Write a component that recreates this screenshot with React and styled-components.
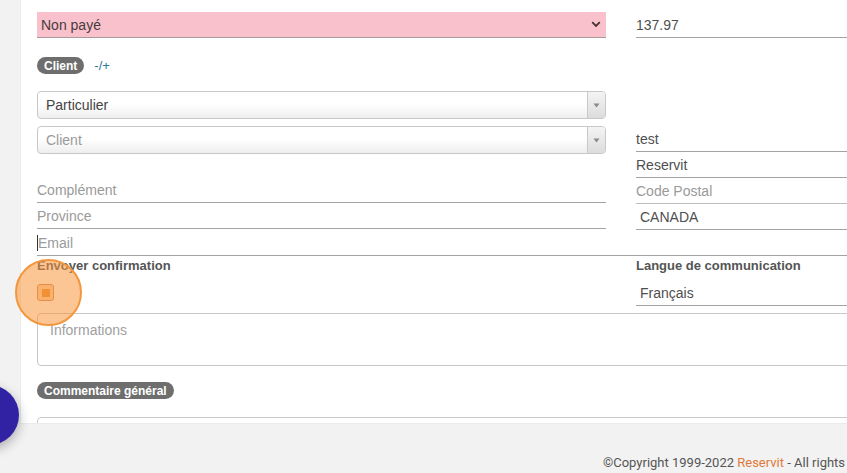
import React from "react";
import styled, { createGlobalStyle } from "styled-components";

const Global = createGlobalStyle`
  html, body { margin: 0; padding: 0; background: #f2f2f2; }
  body { width: 847px; height: 473px; overflow: hidden; font-family: "Liberation Sans", Arial, sans-serif; }
  * { box-sizing: border-box; }
`;

const Page = styled.div`
  position: relative;
  width: 847px;
  height: 473px;
  overflow: hidden;
  background: #f2f2f2;
`;

const Body = styled.div`
  display: flex;
  height: 423px;
  overflow: hidden;
`;

const SideStrip = styled.div`
  flex: 0 0 20px;
  background: #f2f2f2;
`;

const Card = styled.div`
  flex: 0 0 auto;
  width: 1240px;
  background: #fff;
  border-left: 1px solid #ececec;
  padding: 12px 0 0 16px;
`;

const Content = styled.div`
  width: 1168px;
  display: flex;
  flex-direction: column;
`;

const TwoCols = styled.div`
  display: grid;
  grid-template-columns: 569px 569px;
  column-gap: 30px;
  align-items: start;
  margin-top: ${(p) => p.$mt || 0}px;
`;

const Col = styled.div`
  display: flex;
  flex-direction: column;
`;

const PinkSelect = styled.div`
  height: 26px;
  background: #f8c1cb;
  border-bottom: 1px solid #a99a9c;
  display: flex;
  align-items: center;
  justify-content: space-between;
  padding: 0 5px 0 4px;
  font-size: 14px;
  color: #4a3b3e;
`;

const Line = styled.div`
  height: ${(p) => p.$h || 26}px;
  border-bottom: 1px solid ${(p) => (p.$light ? "#bdbdbd" : "#a3a3a3")};
  display: flex;
  align-items: center;
  padding-left: ${(p) => p.$pl || 0}px;
  font-size: 14px;
  color: ${(p) => (p.$ph ? "#9a9a9a" : "#4f4f4f")};
  margin-top: ${(p) => p.$mt || 0}px;
  position: relative;
`;

const Caret = styled.span`
  display: inline-block;
  width: 1px;
  height: 16px;
  background: #333;
`;

const BadgeRow = styled.div`
  display: flex;
  align-items: center;
  gap: 10px;
  margin-top: ${(p) => p.$mt || 0}px;
`;

const Badge = styled.span`
  display: inline-flex;
  align-items: center;
  height: 17px;
  padding: 0 7px;
  border-radius: 9px;
  background: #6e6e6e;
  color: #fff;
  font-weight: bold;
  font-size: 12px;
`;

const Toggle = styled.span`
  color: #2f7896;
  font-size: 13px;
`;

const Select2 = styled.div`
  height: 28px;
  border: 1px solid #c8c8c8;
  border-radius: 4px;
  background: linear-gradient(#ffffff 0%, #ffffff 45%, #eeeeee 100%);
  display: flex;
  align-items: stretch;
  font-size: 14px;
  color: ${(p) => (p.$ph ? "#9a9a9a" : "#444")};
  margin-top: ${(p) => p.$mt || 0}px;
  overflow: hidden;
`;

const Select2Text = styled.div`
  flex: 1;
  display: flex;
  align-items: center;
  padding-left: 8px;
`;

const Select2Arrow = styled.div`
  flex: 0 0 18px;
  border-left: 1px solid #c8c8c8;
  background: linear-gradient(#f4f4f4, #dcdcdc);
  display: flex;
  align-items: center;
  justify-content: center;
`;

const Label = styled.div`
  font-weight: bold;
  font-size: 13px;
  line-height: 16px;
  color: #555;
`;

const CheckWrap = styled.div`
  position: relative;
  width: 17px;
  height: 17px;
  margin-top: 10px;
`;

const CheckBox = styled.div`
  width: 17px;
  height: 17px;
  border: 1px solid #d08a55;
  border-radius: 3px;
  background: #fbd3b0;
  display: flex;
  align-items: center;
  justify-content: center;
  &::after {
    content: "";
    width: 8px;
    height: 8px;
    background: #ef8a2a;
  }
`;

const Highlight = styled.div`
  position: absolute;
  left: 50%;
  top: 50%;
  width: 67px;
  height: 67px;
  margin: -33.5px 0 0 -31px;
  border-radius: 50%;
  border: 2px solid #f2973e;
  background: rgba(247, 150, 60, 0.55);
  pointer-events: none;
`;

const TextArea = styled.div`
  height: ${(p) => p.$h || 53}px;
  border: 1px solid #c8c8c8;
  border-radius: 4px;
  margin-top: ${(p) => p.$mt || 0}px;
  padding: 8px 12px;
  font-size: 14px;
  color: #a0a0a0;
`;

const Footer = styled.div`
  height: 50px;
  background: #f2f2f2;
  border-top: 1px solid #ebebeb;
  padding: 31px 0 0 603px;
  font-family: Roboto, "Liberation Sans", sans-serif;
  font-size: 13px;
  line-height: 16px;
  color: #555;
  white-space: nowrap;
`;

const Brand = styled.span`
  color: #e07a3a;
`;

const Fab = styled.div`
  position: absolute;
  left: -41px;
  top: 385px;
  width: 60px;
  height: 60px;
  border-radius: 50%;
  background: #3022a2;
  box-shadow: 0 4px 12px rgba(0, 0, 0, 0.3);
`;

const Chevron = () => (
  <svg width="10" height="7" viewBox="0 0 10 7">
    <path d="M1.2 1.2 L5 5 L8.8 1.2" fill="none" stroke="#4a2f36" strokeWidth="1.8" />
  </svg>
);

const Tri = () => (
  <svg width="7" height="5" viewBox="0 0 7 5">
    <path d="M0.5 0.5 L6.5 0.5 L3.5 4.5 Z" fill="#8a8a8a" />
  </svg>
);

export default function App() {
  return (
    <Page>
      <Global />
      <Body>
        <SideStrip />
        <Card>
          <Content>
            <TwoCols>
              <PinkSelect>
                <span>Non payé</span>
                <Chevron />
              </PinkSelect>
              <Line>137.97</Line>
            </TwoCols>

            <BadgeRow $mt={19}>
              <Badge>Client</Badge>
              <Toggle>-/+</Toggle>
            </BadgeRow>

            <TwoCols $mt={17}>
              <Select2>
                <Select2Text>Particulier</Select2Text>
                <Select2Arrow><Tri /></Select2Arrow>
              </Select2>
            </TwoCols>

            <TwoCols $mt={7}>
              <Col>
                <Select2 $ph>
                  <Select2Text>Client</Select2Text>
                  <Select2Arrow><Tri /></Select2Arrow>
                </Select2>
                <Line $ph $mt={23}>Complément</Line>
                <Line $ph>Province</Line>
              </Col>
              <Col>
                <Line>test</Line>
                <Line>Reservit</Line>
                <Line $ph $light>Code Postal</Line>
                <Line $pl={4}>CANADA</Line>
              </Col>
            </TwoCols>

            <Line $ph><Caret />Email</Line>

            <TwoCols $mt={2}>
              <Col>
                <Label>Envoyer confirmation</Label>
                <CheckWrap>
                  <CheckBox />
                  <Highlight />
                </CheckWrap>
              </Col>
              <Col>
                <Label>Langue de communication</Label>
                <Line $pl={4} $h={25} $mt={7}>Français</Line>
              </Col>
            </TwoCols>

            <TextArea $mt={7}>Informations</TextArea>

            <BadgeRow $mt={16}>
              <Badge>Commentaire général</Badge>
            </BadgeRow>

            <TextArea $mt={18} $h={60} />
          </Content>
        </Card>
      </Body>
      <Footer>
        ©Copyright 1999-2022 <Brand>Reservit</Brand> - All rights
      </Footer>
      <Fab />
    </Page>
  );
}
